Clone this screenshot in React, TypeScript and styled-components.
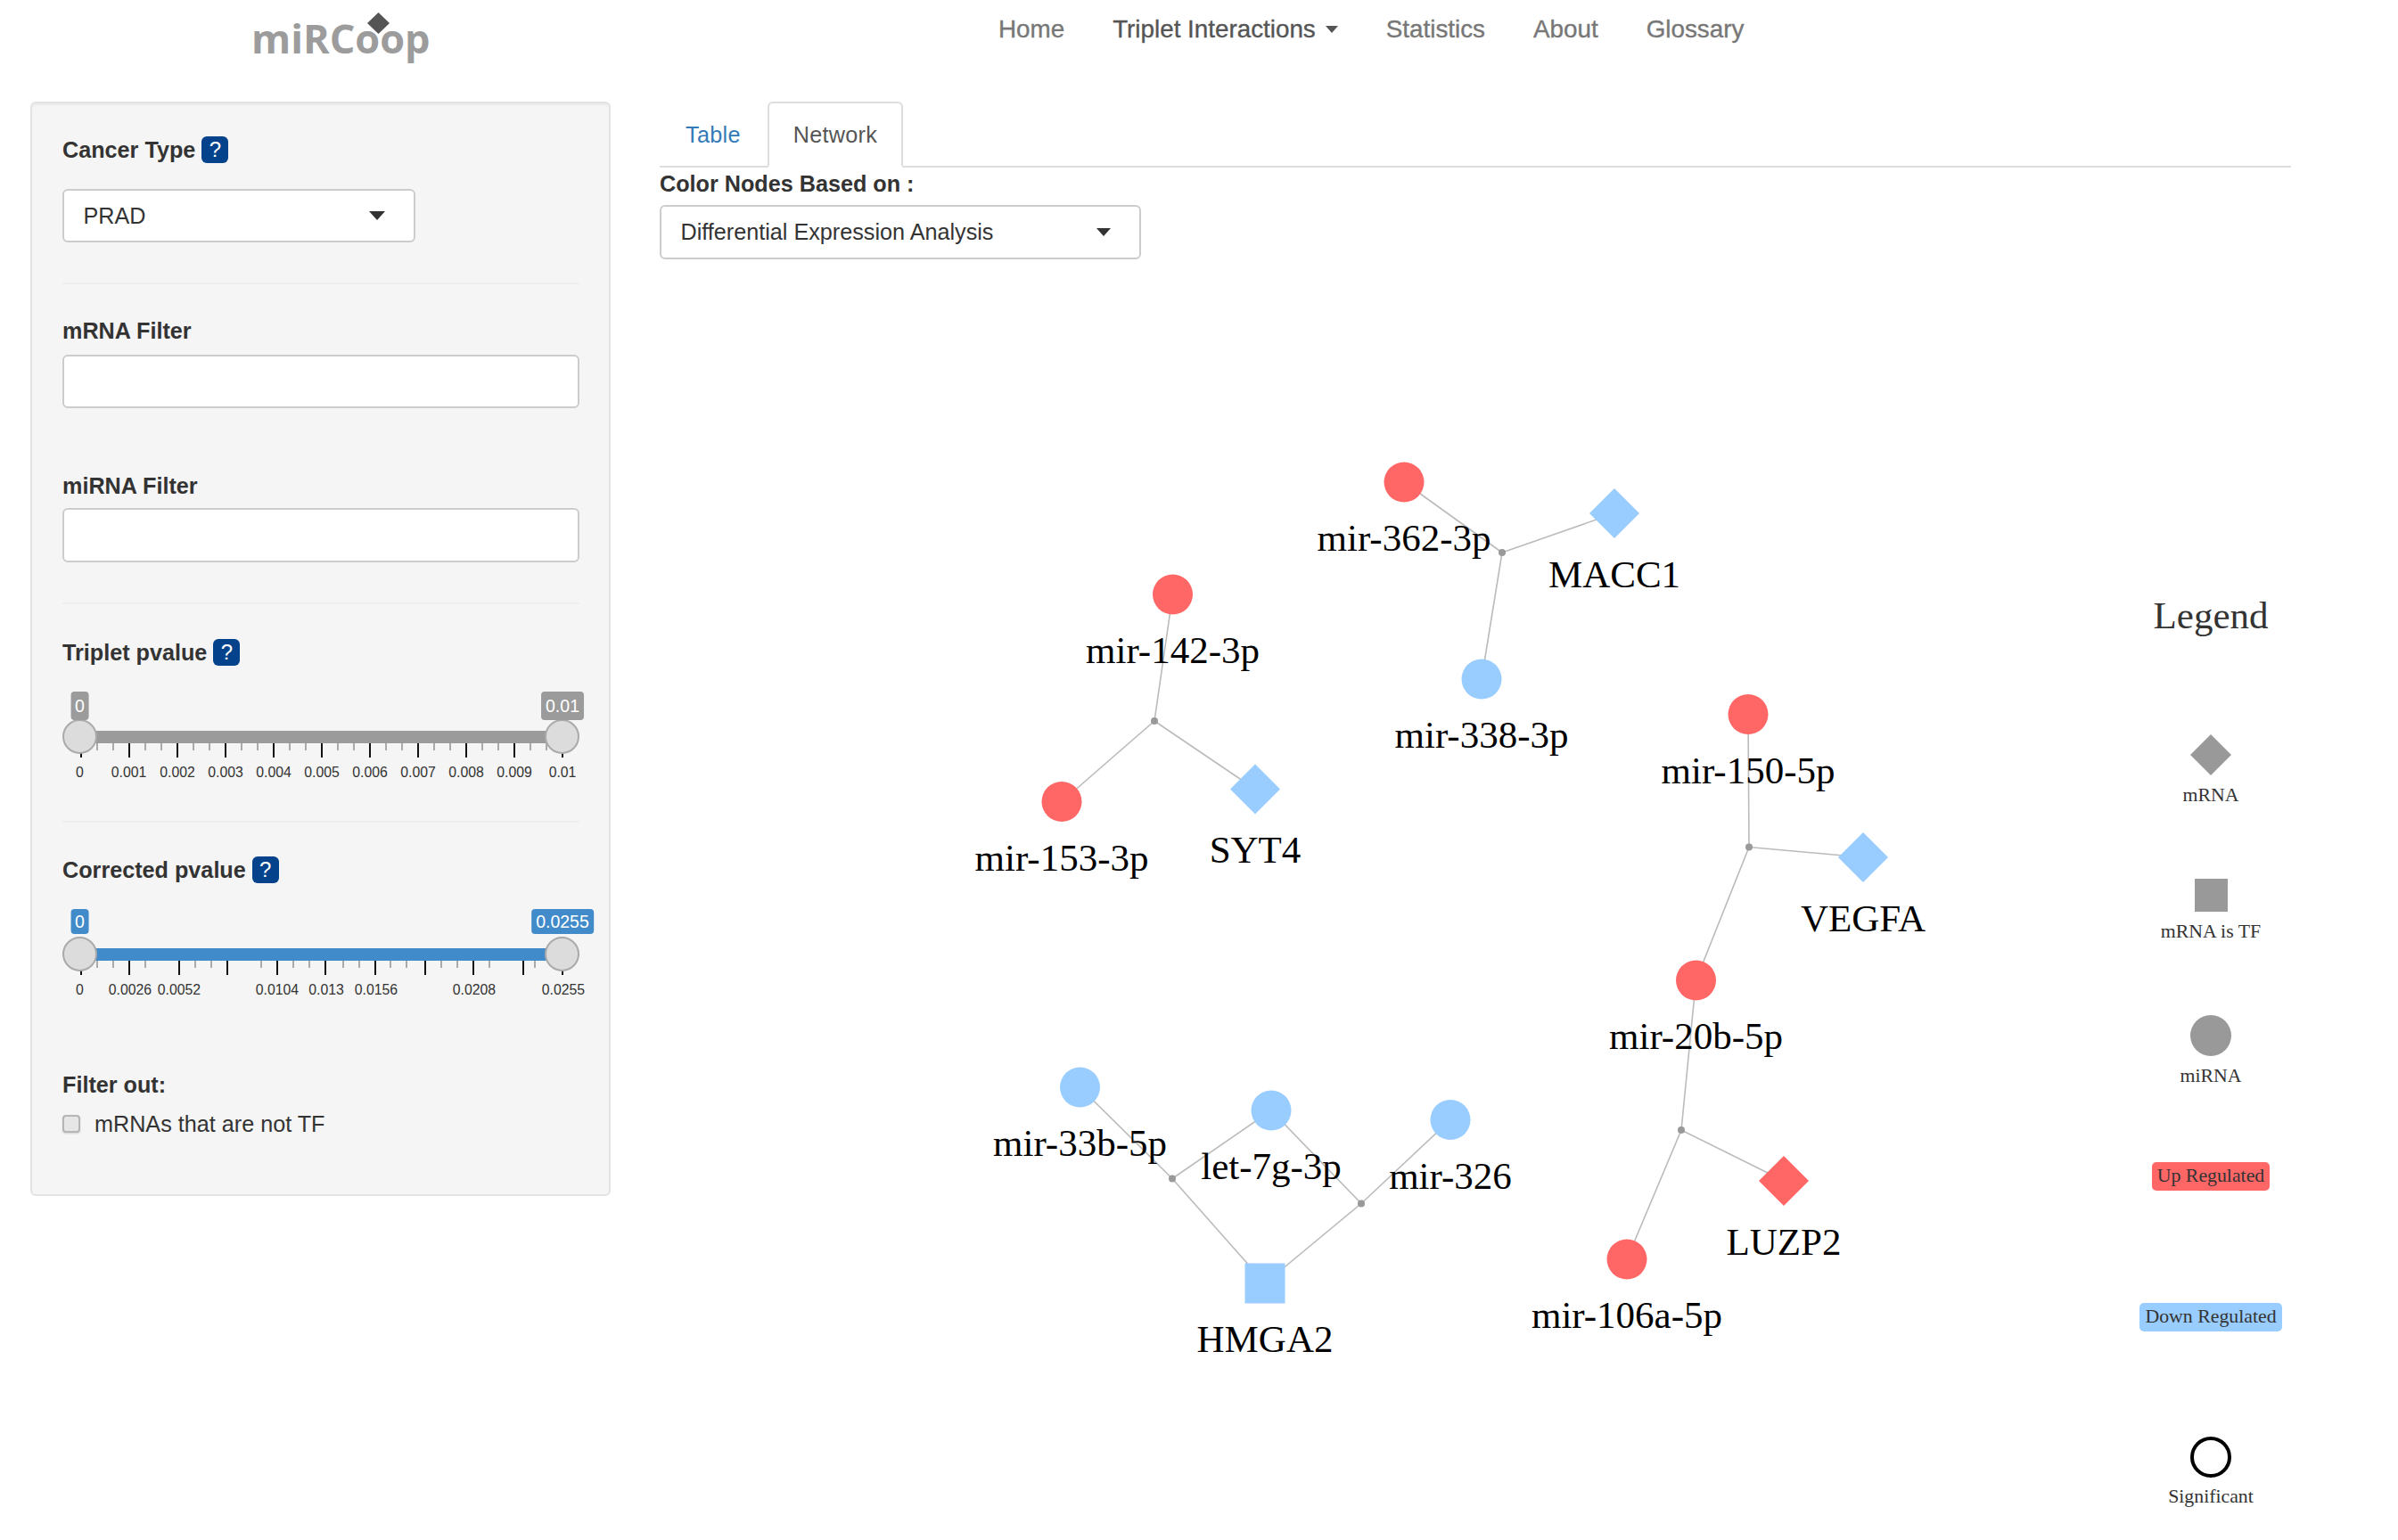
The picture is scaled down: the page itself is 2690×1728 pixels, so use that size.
import React from "react";
import styled, { createGlobalStyle } from "styled-components";

const Global = createGlobalStyle`
  html, body { margin: 0; padding: 0; background: #fff; }
  body { width: 2690px; height: 1728px; overflow: hidden; font-family: "Liberation Sans", Arial, sans-serif; color: #333; }
  * { box-sizing: border-box; }
`;

const Page = styled.div`display: flex; flex-direction: column; width: 2690px; height: 1728px;`;

const Header = styled.header`display: flex; align-items: flex-start; height: 114px; padding-left: 282px;`;
const Logo = styled.div`
  position: relative; width: 838px; height: 80px;
  font-family: "Open Sans", sans-serif; font-weight: 700; font-size: 45px; line-height: 86px; color: #9c9c9c;
`;
const LogoDiamond = styled.svg`position: absolute; left: 130px; top: 14px; width: 25px; height: 24px;`;
const Nav = styled.nav`display: flex; gap: 54px; padding-top: 17px;`;
const NavLink = styled.a<{ $active?: boolean }>`
  display: flex; align-items: center; font-size: 27.8px; line-height: 32px; color: ${p => (p.$active ? "#555" : "#777")};
  -webkit-text-stroke: 0.35px ${p => (p.$active ? "#555" : "#777")};
`;
const Caret = styled.span<{ $w: number; $h: number; $color?: string }>`
  display: inline-block; width: 0; height: 0;
  border-left: ${p => p.$w / 2}px solid transparent; border-right: ${p => p.$w / 2}px solid transparent;
  border-top: ${p => p.$h}px solid ${p => p.$color || "#333"};
`;
const NavCaret = styled(Caret)`margin-left: 11px;`;

const Main = styled.main`display: flex; align-items: flex-start; padding-left: 34px;`;

const Panel = styled.aside`
  width: 651px; height: 1228px; padding: 37px 33px 0 34px;
  background: #f5f5f5; border: 2px solid #e3e3e3; border-radius: 6px;
  box-shadow: inset 0 2px 2px rgba(0,0,0,.05);
`;
const LabelRow = styled.div<{ $mt?: number }>`
  display: flex; align-items: center; gap: 7px; height: 30px; margin-top: ${p => p.$mt || 0}px;
  font-size: 25.2px; font-weight: 700; color: #333;
`;
const Help = styled.span`
  display: flex; align-items: center; justify-content: center; width: 30px; height: 30px;
  background: #04438c; color: #fff; border-radius: 6px; font-size: 24px; font-weight: 400;
`;
const Divider = styled.hr<{ $mt: number; $mb: number }>`
  margin: ${p => p.$mt}px 0 ${p => p.$mb}px; height: 2px; border: 0; background: #eeeeee;
`;
const SelectBox = styled.div<{ $w: number; $h: number; $mt: number }>`
  display: flex; align-items: center; justify-content: space-between;
  width: ${p => p.$w}px; height: ${p => p.$h}px; margin-top: ${p => p.$mt}px; padding: 0 32px 0 21.5px;
  background: #fff; border: 2px solid #ccc; border-radius: 6px; font-size: 25.2px; color: #333;
`;
const TextInput = styled.input<{ $h: number; $mt: number }>`
  display: block; width: 580px; height: ${p => p.$h}px; margin-top: ${p => p.$mt}px;
  background: #fff; border: 2px solid #ccc; border-radius: 6px; outline: none;
`;

const SliderWrap = styled.div<{ $mt: number }>`position: relative; width: 580px; height: 104px; margin-top: ${p => p.$mt}px;`;
const Track = styled.div<{ $color: string }>`
  position: absolute; left: 20px; top: 44px; width: 540px; height: 14px; background: ${p => p.$color};
`;
const Handle = styled.div<{ $right?: boolean; $top: number }>`
  position: absolute; top: ${p => p.$top}px; ${p => (p.$right ? "right: 0" : "left: 0")}; width: 39px; height: 39px;
  border-radius: 50%; background: #dcdcdc; border: 2px solid #aaa;
`;
const Tag = styled.div<{ $color: string; $h: number; $right?: boolean }>`
  position: absolute; top: 0; ${p => (p.$right ? "left: 561px" : "left: 19.5px")}; transform: translateX(-50%);
  height: ${p => p.$h}px; padding: 0 5px; display: flex; align-items: center;
  background: ${p => p.$color}; color: #fff; border-radius: 4px; font-size: 19.5px; z-index: 2;
`;
const Tick = styled.i<{ $major?: boolean }>`
  position: absolute; top: 58px; width: 2px; height: ${p => (p.$major ? 16 : 8)}px; background: ${p => (p.$major ? "#111" : "#aaa")};
`;
const TickLabel = styled.span`
  position: absolute; top: 81px; transform: translateX(-50%); font-size: 15.8px; line-height: 20px; color: #333; white-space: nowrap;
`;

const CheckRow = styled.label`
  display: flex; align-items: center; gap: 16px; height: 30px; margin-top: 14px; font-size: 25.2px; color: #333;
`;
const Check = styled.input`
  appearance: none; width: 20px; height: 20px; margin: 0; background: #e6e6e6; border: 2px solid #b5b5b5; border-radius: 4px;
  box-shadow: 0 1px 2px rgba(0,0,0,.15);
`;

const Content = styled.section`width: 1950px; margin-left: 55px;`;
const Tabs = styled.div`display: flex; width: 1830px; height: 74px; gap: 1px; border-bottom: 2px solid #ddd;`;
const TabItem = styled.a<{ $active?: boolean }>`
  display: flex; align-items: center; height: 74px; padding: 1px 27px 0; font-size: 25.2px; letter-spacing: 0.3px; border-radius: 6px 6px 0 0;
  color: ${p => (p.$active ? "#555" : "#337ab7")};
  background: ${p => (p.$active ? "#fff" : "transparent")};
  border: 2px solid ${p => (p.$active ? "#ddd" : "transparent")};
  border-bottom-color: ${p => (p.$active ? "#fff" : "transparent")};
`;
const ColorLabel = styled(LabelRow)``;
const GraphRow = styled.div`display: flex; align-items: flex-start;`;
const GraphCanvas = styled.svg`display: block; width: 1620px; height: 1437px; flex: none;`;
const NodeLabel = styled.text`font-family: "Liberation Serif", "Times New Roman", serif; font-size: 43px; fill: #000; text-anchor: middle;`;

const Legend = styled.aside`
  width: 240px; padding-top: 375px; display: flex; flex-direction: column; align-items: center;
  font-family: "Liberation Serif", "Times New Roman", serif; color: #333;
`;
const LegendTitle = styled.div`font-size: 43px; line-height: 50px; height: 50px;`;
const LegendShape = styled.svg<{ $mt: number }>`display: block; width: 46px; height: 46px; margin-top: ${p => p.$mt}px;`;
const LegendSquare = styled.div<{ $mt: number }>`width: 37px; height: 37px; margin-top: ${p => p.$mt}px; background: #999;`;
const LegendText = styled.div<{ $mt: number }>`font-size: 21.8px; line-height: 26px; height: 26px; margin-top: ${p => p.$mt}px;`;
const LegendBadge = styled.div<{ $mt: number; $color: string }>`
  height: 32px; padding: 0 6px; margin-top: ${p => p.$mt}px; background: ${p => p.$color}; border-radius: 5px;
  font-size: 21.8px; line-height: 31px;
`;

const tripletTicks = [91, 145, 199, 253, 307, 361, 415, 469, 523, 577, 631];
const tripletMinor = tripletTicks.slice(0, -1).flatMap(x => [x + 18, x + 36]);
const tripletLabels: [number, string][] = [
  [89.5, "0"], [144.5, "0.001"], [199, "0.002"], [253, "0.003"], [307, "0.004"], [361, "0.005"],
  [415, "0.006"], [469, "0.007"], [523, "0.008"], [577, "0.009"], [631, "0.01"],
];
const corrTicks = [91, 145, 201, 255, 311, 365, 421, 477, 531, 587, 631];
const corrMinor = [109, 127, 163, 219, 237, 293, 329, 347, 385, 403, 438, 456, 495, 513, 549, 600];
const corrLabels: [number, string][] = [
  [89.5, "0"], [146, "0.0026"], [201, "0.0052"], [311, "0.0104"], [366, "0.013"], [422, "0.0156"], [532, "0.0208"], [632, "0.0255"],
];

type SliderProps = {
  mt: number; color: string; tagH: number; ticks: number[]; minor: number[]; labels: [number, string][]; hi: string;
};
const Slider = ({ mt, color, tagH, ticks, minor, labels, hi }: SliderProps) => (
  <SliderWrap $mt={mt}>
    {minor.map(x => <Tick key={x} style={{ left: x - 71 }} />)}
    {ticks.map(x => <Tick key={x} $major style={{ left: x - 71 }} />)}
    <Track $color={color} />
    <Tag $color={color} $h={tagH}>0</Tag>
    <Tag $color={color} $h={tagH} $right>{hi}</Tag>
    <Handle $top={31} />
    <Handle $top={31} $right />
    {labels.map(([x, t]) => <TickLabel key={t} style={{ left: x - 70 }}>{t}</TickLabel>)}
  </SliderWrap>
);

const RED = "#ff6666";
const BLUE = "#99ccff";
type N = { id: string; x: number; y: number; c: string; k: "c" | "d" | "s" };
const nodes: N[] = [
  { id: "mir-362-3p", x: 1575, y: 541, c: RED, k: "c" },
  { id: "MACC1", x: 1811, y: 576, c: BLUE, k: "d" },
  { id: "mir-338-3p", x: 1662, y: 762, c: BLUE, k: "c" },
  { id: "mir-142-3p", x: 1315.5, y: 667, c: RED, k: "c" },
  { id: "mir-153-3p", x: 1191, y: 899.5, c: RED, k: "c" },
  { id: "SYT4", x: 1408, y: 885.5, c: BLUE, k: "d" },
  { id: "mir-150-5p", x: 1961, y: 801.5, c: RED, k: "c" },
  { id: "VEGFA", x: 2090, y: 962, c: BLUE, k: "d" },
  { id: "mir-20b-5p", x: 1902.5, y: 1100, c: RED, k: "c" },
  { id: "mir-33b-5p", x: 1211.5, y: 1220, c: BLUE, k: "c" },
  { id: "let-7g-3p", x: 1426, y: 1246, c: BLUE, k: "c" },
  { id: "mir-326", x: 1627, y: 1256.5, c: BLUE, k: "c" },
  { id: "HMGA2", x: 1419, y: 1440, c: BLUE, k: "s" },
  { id: "LUZP2", x: 2001, y: 1325, c: RED, k: "d" },
  { id: "mir-106a-5p", x: 1825, y: 1413, c: RED, k: "c" },
];
const junctions: { x: number; y: number; to: string[] }[] = [
  { x: 1685, y: 620, to: ["mir-362-3p", "MACC1", "mir-338-3p"] },
  { x: 1295, y: 809, to: ["mir-142-3p", "mir-153-3p", "SYT4"] },
  { x: 1962, y: 950.5, to: ["mir-150-5p", "VEGFA", "mir-20b-5p"] },
  { x: 1886, y: 1268, to: ["mir-20b-5p", "mir-106a-5p", "LUZP2"] },
  { x: 1315, y: 1322.5, to: ["mir-33b-5p", "let-7g-3p", "HMGA2"] },
  { x: 1527, y: 1350.5, to: ["let-7g-3p", "mir-326", "HMGA2"] },
];
const find = (id: string) => nodes.find(n => n.id === id)!;
const dy = { c: 77, d: 82.5, s: 76.5 };

const Graph = () => (
  <GraphCanvas viewBox="740 291 1620 1437">
    {junctions.map((j, i) =>
      j.to.map(t => {
        const n = find(t);
        return <line key={i + t} x1={j.x} y1={j.y} x2={n.x} y2={n.y} stroke="#bbb" strokeWidth={1.6} />;
      })
    )}
    {junctions.map((j, i) => <circle key={i} cx={j.x} cy={j.y} r={4} fill="#999" />)}
    {nodes.map(n =>
      n.k === "c" ? <circle key={n.id} cx={n.x} cy={n.y} r={22.5} fill={n.c} />
      : n.k === "d" ? <polygon key={n.id} points={`${n.x},${n.y - 28} ${n.x + 28},${n.y} ${n.x},${n.y + 28} ${n.x - 28},${n.y}`} fill={n.c} />
      : <rect key={n.id} x={n.x - 22.5} y={n.y - 22.5} width={45} height={45} fill={n.c} />
    )}
    {nodes.map(n => <NodeLabel key={n.id} x={n.x} y={n.y + dy[n.k]}>{n.id}</NodeLabel>)}
  </GraphCanvas>
);

export default function App() {
  return (
    <Page>
      <Global />
      <Header>
        <Logo>
          miRCoop
          <LogoDiamond viewBox="0 0 25 24"><polygon points="12.5,0 25,12 12.5,24 0,12" fill="#555" /></LogoDiamond>
        </Logo>
        <Nav>
          <NavLink>Home</NavLink>
          <NavLink $active>Triplet Interactions<NavCaret $w={14} $h={8} $color="#555" /></NavLink>
          <NavLink>Statistics</NavLink>
          <NavLink>About</NavLink>
          <NavLink>Glossary</NavLink>
        </Nav>
      </Header>
      <Main>
        <Panel>
          <LabelRow>Cancer Type <Help>?</Help></LabelRow>
          <SelectBox $w={396} $h={60} $mt={29}>PRAD<Caret $w={18} $h={10} /></SelectBox>
          <Divider $mt={45} $mb={37} />
          <LabelRow>mRNA Filter</LabelRow>
          <TextInput $h={60} $mt={12} />
          <LabelRow $mt={72}>miRNA Filter</LabelRow>
          <TextInput $h={61} $mt={10} />
          <Divider $mt={45} $mb={39} />
          <LabelRow>Triplet pvalue <Help>?</Help></LabelRow>
          <Slider mt={29} color="#9b9b9b" tagH={32} ticks={tripletTicks} minor={tripletMinor} labels={tripletLabels} hi="0.01" />
          <Divider $mt={41} $mb={38} />
          <LabelRow>Corrected pvalue <Help>?</Help></LabelRow>
          <Slider mt={29} color="#428bca" tagH={28} ticks={corrTicks} minor={corrMinor} labels={corrLabels} hi="0.0255" />
          <LabelRow $mt={78}>Filter out:</LabelRow>
          <CheckRow><Check type="checkbox" />mRNAs that are not TF</CheckRow>
        </Panel>
        <Content>
          <Tabs>
            <TabItem>Table</TabItem>
            <TabItem $active>Network</TabItem>
          </Tabs>
          <ColorLabel $mt={3}>Color Nodes Based on :</ColorLabel>
          <SelectBox $w={540} $h={61} $mt={9}>Differential Expression Analysis<Caret $w={17} $h={9} /></SelectBox>
          <GraphRow>
            <Graph />
            <Legend>
              <LegendTitle>Legend</LegendTitle>
              <LegendShape $mt={108} viewBox="0 0 46 46"><polygon points="23,0 46,23 23,46 0,23" fill="#999" /></LegendShape>
              <LegendText $mt={9}>mRNA</LegendText>
              <LegendSquare $mt={81} />
              <LegendText $mt={9}>mRNA is TF</LegendText>
              <LegendShape $mt={81} viewBox="0 0 46 46"><circle cx="23" cy="23" r="23" fill="#999" /></LegendShape>
              <LegendText $mt={9}>miRNA</LegendText>
              <LegendBadge $mt={84} $color="#ff6666">Up Regulated</LegendBadge>
              <LegendBadge $mt={126} $color="#99ccff">Down Regulated</LegendBadge>
              <LegendShape $mt={118} viewBox="0 0 46 46"><circle cx="23" cy="23" r="21" fill="none" stroke="#000" strokeWidth="4" /></LegendShape>
              <LegendText $mt={8}>Significant</LegendText>
            </Legend>
          </GraphRow>
        </Content>
      </Main>
    </Page>
  );
}
